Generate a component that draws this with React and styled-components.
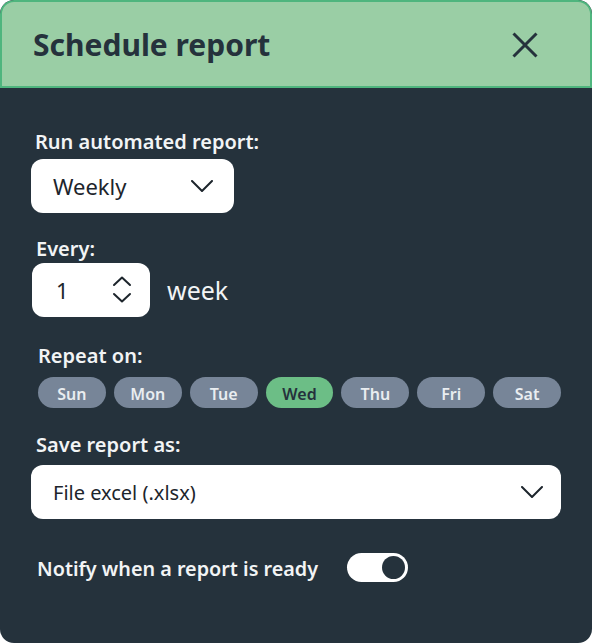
import React from "react";
import styled, { createGlobalStyle } from "styled-components";

const GlobalStyle = createGlobalStyle`
  html, body {
    margin: 0;
    padding: 0;
    background: #ffffff;
  }
  body {
    font-family: "Noto Sans", "Open Sans", sans-serif;
  }
`;

const Card = styled.div`
  width: 592px;
  height: 643px;
  border-radius: 14px;
  background: #25323c;
  overflow: hidden;
  display: flex;
  flex-direction: column;
`;

const Header = styled.header`
  height: 88px;
  box-sizing: border-box;
  background: #9acea5;
  border: 2px solid #4fb57e;
  border-radius: 14px 14px 0 0;
  display: flex;
  align-items: center;
  justify-content: space-between;
  padding: 2px 52px 0 31px;
`;

const Title = styled.h1`
  margin: 0;
  font-size: 30px;
  font-weight: 700;
  color: #25323c;
  line-height: 1;
`;

const CloseButton = styled.button`
  border: 0;
  background: none;
  padding: 0;
  width: 26px;
  height: 26px;
  display: flex;
  cursor: pointer;
`;

const Body = styled.div`
  display: flex;
  flex-direction: column;
  padding: 40px 31px 0 31px;
`;

const Label = styled.div`
  font-size: 20px;
  line-height: 24px;
  font-weight: 600;
  color: #f2f4f5;
  padding-left: ${(p) => p.$indent || 4}px;
  margin-top: ${(p) => p.$top || 0}px;
  margin-bottom: ${(p) => p.$bottom || 0}px;
`;

const Select = styled.div`
  width: ${(p) => p.$width};
  height: 54px;
  box-sizing: border-box;
  background: #ffffff;
  border-radius: 12px;
  display: flex;
  align-items: center;
  justify-content: space-between;
  padding: 0 ${(p) => p.$right}px 0 ${(p) => p.$left}px;
  font-size: ${(p) => p.$size}px;
  color: #1d252c;
`;

const Row = styled.div`
  display: flex;
  align-items: center;
  gap: 17px;
`;

const NumberBox = styled.div`
  width: 118px;
  height: 54px;
  box-sizing: border-box;
  margin-left: 1px;
  background: #ffffff;
  border-radius: 12px;
  display: flex;
  align-items: center;
  justify-content: space-between;
  padding: 0 18px 0 24px;
  font-size: 22px;
  color: #1d252c;
`;

const Unit = styled.span`
  font-size: 25px;
  color: #f2f4f5;
`;

const Days = styled.div`
  display: flex;
  gap: 8px;
  padding-left: 7px;
`;

const Day = styled.span`
  width: 68px;
  height: 31px;
  box-sizing: border-box;
  padding-top: 2px;
  border-radius: 16px;
  display: flex;
  align-items: center;
  justify-content: center;
  font-size: 16px;
  font-weight: 600;
  background: ${(p) => (p.$active ? "#6cbe86" : "#778598")};
  color: ${(p) => (p.$active ? "#25323c" : "#e9edf0")};
`;

const NotifyRow = styled.div`
  display: flex;
  align-items: center;
  gap: 29px;
  padding-left: 6px;
  margin-top: 33px;
`;

const NotifyText = styled.span`
  font-size: 19.8px;
  font-weight: 600;
  color: #f2f4f5;
  padding-top: 3px;
`;

const Toggle = styled.div`
  width: 61px;
  height: 29px;
  box-sizing: border-box;
  border-radius: 15px;
  background: #ffffff;
  display: flex;
  align-items: center;
  justify-content: flex-end;
  padding-right: 3px;
`;

const Knob = styled.span`
  width: 23px;
  height: 23px;
  border-radius: 50%;
  background: #25323c;
`;

const Chevron = () => (
  <svg width="22" height="12" viewBox="0 0 22 12" fill="none">
    <polyline
      points="1,1 11,11 21,1"
      stroke="#1d252c"
      strokeWidth="2"
      strokeLinecap="round"
      strokeLinejoin="round"
    />
  </svg>
);

const Spinner = () => (
  <svg width="20" height="28" viewBox="0 0 20 28" fill="none">
    <polyline
      points="2,9 10,1.5 18,9"
      stroke="#1d252c"
      strokeWidth="2"
      strokeLinecap="round"
      strokeLinejoin="round"
    />
    <polyline
      points="2,18 10,25.5 18,18"
      stroke="#1d252c"
      strokeWidth="2"
      strokeLinecap="round"
      strokeLinejoin="round"
    />
  </svg>
);

const CloseIcon = () => (
  <svg width="26" height="26" viewBox="0 0 26 26" fill="none">
    <path d="M1.5 1.5 L24.5 24.5 M24.5 1.5 L1.5 24.5" stroke="#25323c" strokeWidth="3" />
  </svg>
);

const days = ["Sun", "Mon", "Tue", "Wed", "Thu", "Fri", "Sat"];

function App() {
  return (
    <>
      <GlobalStyle />
      <Card>
        <Header>
          <Title>Schedule report</Title>
          <CloseButton aria-label="Close">
            <CloseIcon />
          </CloseButton>
        </Header>
        <Body>
          <Label $top={2} $bottom={5}>Run automated report:</Label>
          <Select $width="203px" $left={22} $right={21} $size={22}>
            Weekly
            <Chevron />
          </Select>

          <Label $top={24} $bottom={2} $indent={5}>Every:</Label>
          <Row>
            <NumberBox>
              1
              <Spinner />
            </NumberBox>
            <Unit>week</Unit>
          </Row>

          <Label $top={27} $bottom={9} $indent={7}>Repeat on:</Label>
          <Days>
            {days.map((d) => (
              <Day key={d} $active={d === "Wed"}>
                {d}
              </Day>
            ))}
          </Days>

          <Label $top={25} $bottom={8} $indent={5}>Save report as:</Label>
          <Select $width="530px" $left={22} $right={18} $size={20}>
            File excel (.xlsx)
            <Chevron />
          </Select>

          <NotifyRow>
            <NotifyText>Notify when a report is ready</NotifyText>
            <Toggle>
              <Knob />
            </Toggle>
          </NotifyRow>
        </Body>
      </Card>
    </>
  );
}

export default App;
